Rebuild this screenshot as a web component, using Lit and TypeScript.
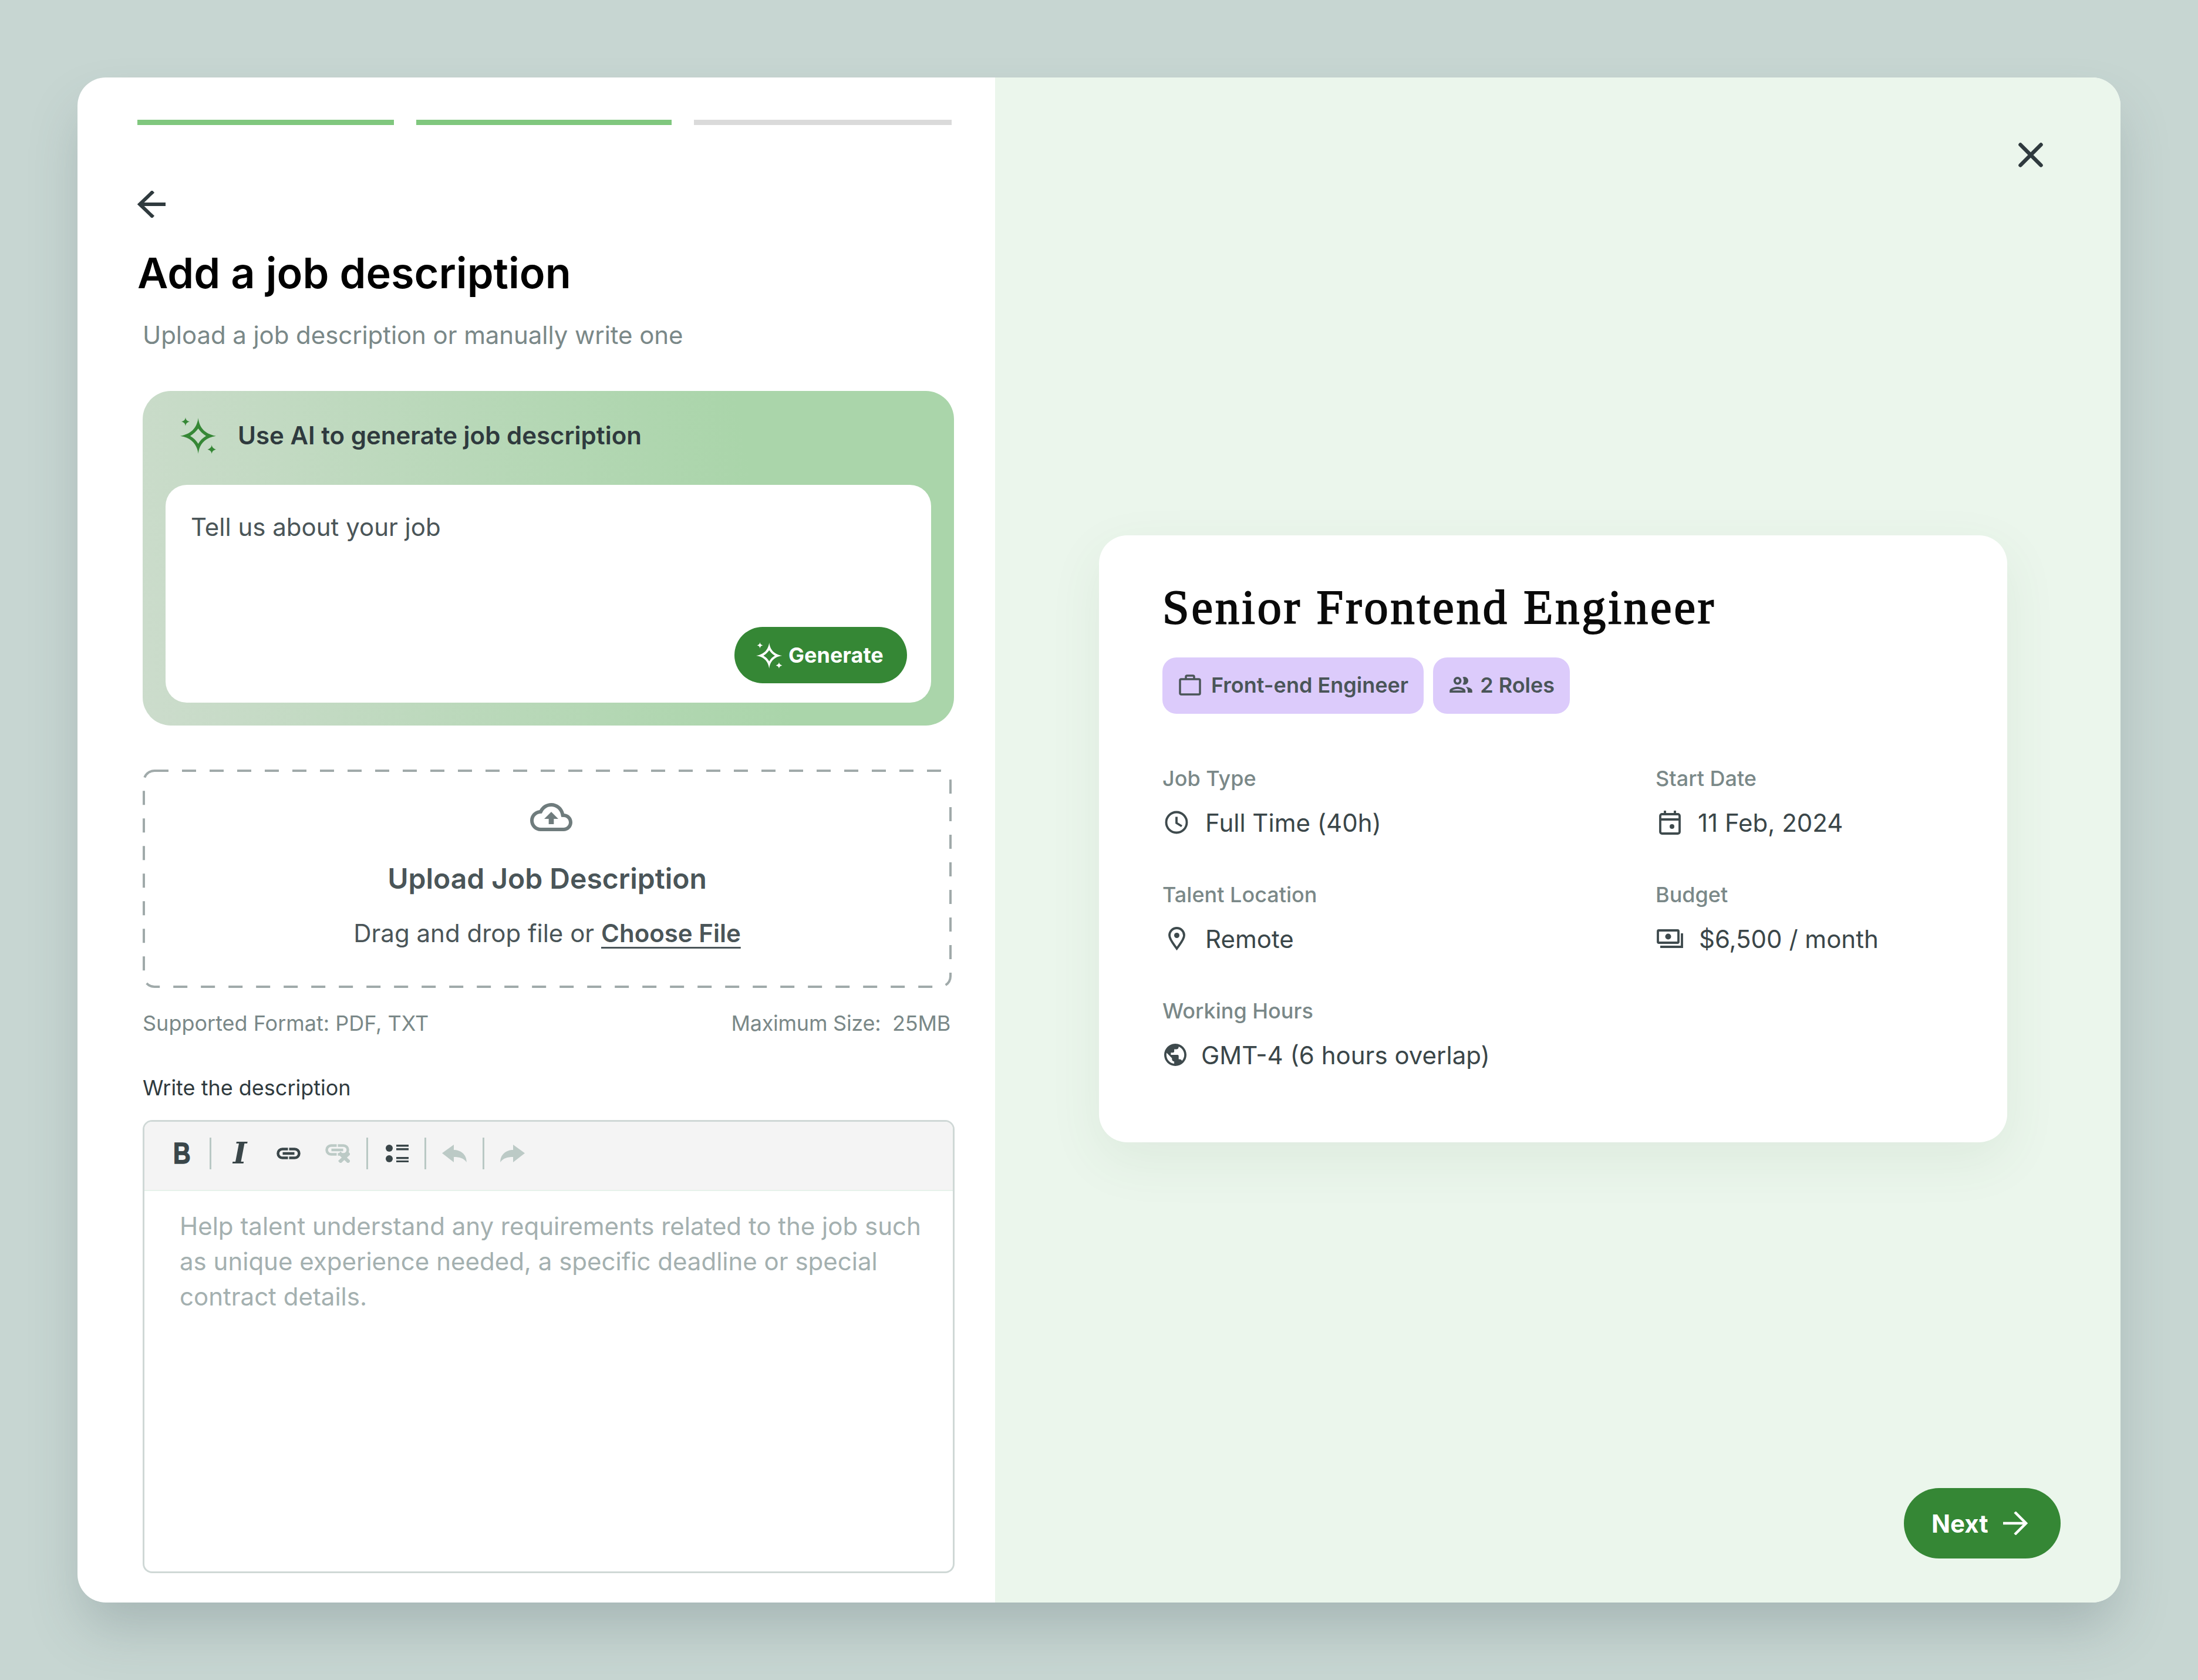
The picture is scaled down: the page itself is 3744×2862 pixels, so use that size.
import { LitElement, html, css, svg } from 'lit'
import { customElement } from 'lit/decorators.js'

const sparkle = svg`
  <path fill-rule="evenodd" d="M47.7 17C49 30 56 44 78 47.7C56 51 49 65 47.7 78C46 65 39 51 17 47.7C39 44 46 30 47.7 17ZM47.7 35C51 40 55 44 61 47.7C55 51 51 55 47.7 61C44 55 40 51 34 47.7C40 44 44 40 47.7 35Z"/>
  <path d="M26 16C26.6 20 28 22 33 23.3C28 24.6 26.6 27 26 31C25.4 27 24 24.6 19 23.3C24 22 25.4 20 26 16Z"/>
  <path d="M70.7 63C71.3 67 73 69 78 70.7C73 72 71.3 74 70.7 78C70 74 68.4 72 63.4 70.7C68.4 69 70 67 70.7 63Z"/>
`

const linkShape = svg`
  <path d="M19.5 2.5H10a7.5 7.5 0 0 0 0 15h9.500" />
  <path d="M21.500 2.500H31a7.500 7.500 0 0 1 0 15h-9.500" />
  <path d="M10.500 10H30.500" />
`

const icons = {
  clock: svg`<svg class="ic" width="40" height="40" viewBox="0 0 40 40" fill="none" stroke="currentColor" stroke-width="3.800"><circle cx="20" cy="20" r="17.500"/><path d="M20 10.500V21L29 26.500"/></svg>`,
  calendar: svg`<svg class="ic" width="37" height="41" viewBox="0 0 37 41" fill="none" stroke="currentColor" stroke-width="3.800"><rect x="2" y="6" width="33" height="33" rx="3"/><path d="M2 15H35M10 0V8M27 0V8"/><circle cx="22" cy="27" r="4" fill="currentColor" stroke="none"/></svg>`,
  pin: svg`<svg class="ic" width="29" height="40" viewBox="0 0 29 40" fill="none" stroke="currentColor" stroke-width="3.800"><path d="M14.500 37C9 29 2 21.500 2 14.500A12.500 12.500 0 0 1 27 14.500C27 21.500 20 29 14.500 37Z"/><circle cx="14.500" cy="14.500" r="4.500" fill="currentColor" stroke="none"/></svg>`,
  money: svg`<svg class="ic" width="45" height="32" viewBox="0 0 45 32" fill="none" stroke="currentColor" stroke-width="3.800"><rect x="2" y="2" width="35" height="21" rx="1.500"/><circle cx="19.500" cy="12.500" r="5" fill="currentColor" stroke="none"/><path d="M43 7V30H6"/></svg>`,
  globe: svg`<svg class="ic" width="38" height="38" viewBox="2 2 20 20" fill="currentColor"><path d="M12 2C6.480 2 2 6.480 2 12s4.480 10 10 10 10-4.480 10-10S17.520 2 12 2zm-1 17.930c-3.950-.490-7-3.850-7-7.930 0-.620.080-1.210.210-1.790L9 15v1c0 1.100.900 2 2 2v1.930zm6.900-2.540c-.260-.810-1-1.390-1.900-1.390h-1v-3c0-.550-.450-1-1-1H8v-2h2c.550 0 1-.450 1-1V7h2c1.100 0 2-.900 2-2v-.410c2.930 1.190 5 4.060 5 7.410 0 2.080-.800 3.970-2.100 5.390z"/></svg>`,
}

const details = [
  { label: 'Job Type', value: 'Full Time (40h)', icon: icons.clock, cls: 'w60' },
  { label: 'Start Date', value: '11 Feb, 2024', icon: icons.calendar, cls: 'w72' },
  { label: 'Talent Location', value: 'Remote', icon: icons.pin, cls: 'w73' },
  { label: 'Budget', value: '$6,500 / month', icon: icons.money, cls: 'w74' },
  { label: 'Working Hours', value: 'GMT-4 (6 hours overlap)', icon: icons.globe, cls: 'w66' },
]

@customElement('app-root')
export class AppRoot extends LitElement {
  static styles = css`
    :host {
      display: block;
      width: 3744px;
      height: 2862px;
      background: #c7d6d2;
      font-family: Inter, 'Noto Sans', sans-serif;
      overflow: hidden;
    }
    * {
      box-sizing: border-box;
    }
    .modal {
      position: relative;
      top: 132px;
      left: 132px;
      display: flex;
      width: 3480px;
      height: 2598px;
      border-radius: 48px;
      background: #fff;
      box-shadow: 0 50px 90px -10px rgba(70, 90, 95, 0.26);
      overflow: hidden;
    }
    .left {
      width: 1563px;
      flex: none;
      padding: 72px 0 0 102px;
    }
    .right {
      flex: 1;
      display: flex;
      flex-direction: column;
      background: #ebf6ec;
      padding-top: 111px;
    }

    /* progress */
    .steps {
      display: grid;
      grid-template-columns: 437px 435px 439px;
      gap: 38px;
    }
    .steps span {
      height: 9px;
      background: #80c77e;
    }
    .steps span.off {
      background: #dadada;
    }
    .back {
      display: block;
      margin-top: 112px;
      color: #2f3a3e;
    }
    h1 {
      margin: 50px 0 0;
      font-size: 72px;
      line-height: 88px;
      font-weight: 600;
      color: #000;
    }
    .sub {
      margin: 34px 0 0 9px;
      font-size: 42px;
      line-height: 56px;
      letter-spacing: -0.08px;
      color: #7a8888;
    }

    .col {
      margin-left: 9px;
    }
    .ai {
      width: 1382px;
      height: 570px;
      margin-top: 67px;
      border-radius: 48px;
      background: linear-gradient(80deg, #ccdccc 0%, #aad5aa 75%);
    }
    .ai-head {
      display: flex;
      align-items: center;
      gap: 36px;
      height: 151px;
      margin-bottom: 9px;
      padding-left: 64px;
      font-size: 42px;
      font-weight: 600;
      color: #2f3a3e;
    }
    .spark {
      fill: #358735;
    }
    .ai-box {
      display: flex;
      flex-direction: column;
      justify-content: space-between;
      width: 1304px;
      height: 371px;
      margin-left: 39px;
      padding: 47px 41px 33px 43px;
      border-radius: 36px;
      background: #fff;
      font-size: 42px;
      line-height: 50px;
      color: #4a5558;
    }
    .gen {
      align-self: flex-end;
      display: flex;
      align-items: center;
      gap: 10px;
      height: 96px;
      width: 294px;
      padding-left: 37px;
      border-radius: 48px;
      background: #358735;
      color: #fff;
      font-size: 36px;
      font-weight: 700;
    }
    .gen .spark {
      fill: #fff;
    }

    .drop {
      position: relative;
      display: flex;
      flex-direction: column;
      align-items: center;
      width: 1378px;
      height: 372px;
      margin-top: 75px;
      padding-top: 57px;
      color: #4a5558;
    }
    .dash {
      position: absolute;
      inset: 0;
      width: 100%;
      height: 100%;
      fill: none;
      stroke: #a0aaaa;
      stroke-width: 4;
      stroke-dasharray: 24 23;
    }
    .cloud {
      fill: #6f7c7d;
      margin-left: 14px;
    }
    .drop h2 {
      margin: 51px 0 0;
      font-size: 48px;
      line-height: 60px;
      font-weight: 600;
    }
    .drop p {
      margin: 35px 0 0;
      font-size: 42px;
      line-height: 56px;
    }
    .drop b {
      font-weight: 600;
      text-decoration: underline;
      text-underline-offset: 8px;
      text-decoration-thickness: 3px;
    }
    .meta {
      display: flex;
      justify-content: space-between;
      width: 1376px;
      margin-top: 38px;
      font-size: 36px;
      line-height: 44px;
      color: #7a8888;
    }
    .meta .max {
      letter-spacing: -0.25px;
    }
    .write {
      margin-top: 66px;
      font-size: 36px;
      line-height: 44px;
      color: #2f3a3e;
    }

    .editor {
      width: 1383px;
      height: 772px;
      margin-top: 33px;
      border: 3px solid #cfd8d6;
      border-radius: 16px;
      overflow: hidden;
    }
    .toolbar {
      display: flex;
      align-items: center;
      height: 118px;
      padding: 0 0 8px 49px;
      background: #f4f4f4;
      border-bottom: 2px solid #e6f1ea;
      color: #3a4649;
    }
    .sep {
      width: 3px;
      height: 54px;
      background: #b9c8c4;
    }
    .tb-b {
      width: 29px;
      font-family: 'Liberation Sans', sans-serif;
      font-weight: 700;
      font-size: 50px;
      line-height: 54px;
      -webkit-text-stroke: 1.5px currentColor;
      transform: scaleX(0.82);
      transform-origin: left center;
      margin-right: 33px;
    }
    .tb-i {
      width: 26px;
      margin: 0 48px 0 37px;
      font-family: 'DejaVu Serif', serif;
      font-weight: 700;
      font-style: italic;
      font-size: 50px;
      line-height: 54px;
    }
    .link {
      fill: none;
      stroke: currentColor;
      stroke-width: 4.500;
    }
    .pale {
      color: #bccac6;
    }
    .tb-unlink {
      margin: 0 28px 0 42px;
    }
    .tb-list {
      margin: 0 27px 0 30px;
    }
    .tb-undo {
      margin: 0 27px 0 27px;
      fill: #bccac6;
    }
    .tb-redo {
      margin-left: 27px;
      fill: #bccac6;
    }
    .body {
      padding: 30px 40px 0 60px;
      font-size: 42px;
      line-height: 60px;
      color: #a4b0b0;
    }

    /* right side */
    .close {
      align-self: flex-end;
      display: block;
      margin-right: 132px;
      stroke: #2f3a3e;
    }
    .card {
      width: 1547px;
      height: 1034px;
      margin: 627px 0 0 177px;
      padding: 73px 0 0 108px;
      border-radius: 48px;
      background: #fff;
      box-shadow: 0 30px 90px rgba(60, 100, 70, 0.08);
    }
    .card h2 {
      margin: 0;
      font-family: 'Liberation Serif', serif;
      font-size: 82px;
      line-height: 100px;
      font-weight: 400;
      letter-spacing: 4px;
      -webkit-text-stroke: 2px #0a0a0a;
      color: #0a0a0a;
    }
    .pills {
      display: flex;
      gap: 16px;
      margin-top: 35px;
    }
    .pill {
      display: flex;
      align-items: center;
      height: 96px;
      padding: 0 26px 3px 28px;
      gap: 17px;
      border-radius: 24px;
      background: #dccbfb;
      color: #4a5558;
      font-size: 36px;
      font-weight: 600;
    }
    .pill.tight {
      gap: 13px;
    }
    .grid {
      display: grid;
      grid-template-columns: 840px 1fr;
      row-gap: 77px;
      margin-top: 88px;
    }
    .label {
      font-size: 36px;
      line-height: 44px;
      color: #7a8888;
      font-weight: 500;
    }
    .value {
      display: flex;
      align-items: center;
      height: 48px;
      margin-top: 29px;
      font-size: 42px;
      color: #3a4649;
    }
    .ic {
      flex: none;
      color: #3e4a4d;
    }
    .slot {
      display: flex;
      align-items: center;
    }
    .w60 {
      width: 73px;
      padding-left: 4px;
    }
    .w72 {
      width: 72px;
      padding-left: 6px;
    }
    .w73 {
      width: 73px;
      padding-left: 10px;
    }
    .w74 {
      width: 74px;
      padding-left: 2px;
    }
    .w66 {
      width: 66px;
      padding-left: 3px;
    }
    .next {
      align-self: flex-end;
      display: flex;
      align-items: center;
      gap: 25px;
      width: 267px;
      height: 120px;
      margin: auto 102px 75px 0;
      padding-left: 47px;
      border-radius: 60px;
      background: #358735;
      color: #fff;
      font-size: 42px;
      font-weight: 700;
    }
  `

  render() {
    return html`
      <div class="modal">
        <section class="left">
          <div class="steps"><span></span><span></span><span class="off"></span></div>
          <svg class="back" width="48" height="46" viewBox="0 0 48 46" fill="none" stroke="currentColor" stroke-width="6">
            <path d="M48 23H4M27 1L4 23L27 45" />
          </svg>
          <h1>Add a job description</h1>
          <p class="sub">Upload a job description or manually write one</p>

          <div class="col">
            <div class="ai">
              <div class="ai-head">
                <svg class="spark" width="62" height="62" viewBox="17 16 62 62">${sparkle}</svg>
                Use AI to generate job description
              </div>
              <div class="ai-box">
                <span>Tell us about your job</span>
                <div class="gen">
                  <svg class="spark" width="45" height="45" viewBox="17 16 62 62">${sparkle}</svg>
                  Generate
                </div>
              </div>
            </div>

            <div class="drop">
              <svg class="dash" viewBox="0 0 1378 372"><rect x="2" y="2" width="1374" height="368" rx="18" /></svg>
              <svg class="cloud" width="72" height="48" viewBox="0 4 24 16">
                <path d="M19.350 10.040C18.670 6.590 15.640 4 12 4 9.110 4 6.600 5.640 5.350 8.040 2.340 8.360 0 10.910 0 14c0 3.310 2.690 6 6 6h13c2.760 0 5-2.240 5-5 0-2.640-2.050-4.780-4.650-4.960zM19 18H6c-2.210 0-4-1.790-4-4 0-2.050 1.530-3.760 3.560-3.970l1.070-.110.500-.950C8.080 7.140 9.940 6 12 6c2.620 0 4.880 1.860 5.390 4.430l.300 1.500 1.530.110c1.560.100 2.780 1.410 2.780 2.960 0 1.650-1.350 3-3 3zM8 13h2.550v3h2.900v-3H16l-4-4z" />
              </svg>
              <h2>Upload Job Description</h2>
              <p>Drag and drop file or <b>Choose File</b></p>
            </div>

            <div class="meta">
              <span>Supported Format: PDF, TXT</span>
              <span class="max">Maximum Size:&nbsp; 25MB</span>
            </div>

            <div class="write">Write the description</div>

            <div class="editor">
              <div class="toolbar">
                <span class="tb-b">B</span>
                <span class="sep"></span>
                <span class="tb-i">I</span>
                <svg class="link" width="41" height="20" viewBox="0 0 41 20">${linkShape}</svg>
                <svg class="link pale tb-unlink" width="42" height="32" viewBox="0 0 42 32">
                  ${linkShape}
                  <path d="M24 15L41 31M41 15L24 31" stroke-width="6" />
                </svg>
                <span class="sep"></span>
                <svg class="tb-list" width="39" height="30" viewBox="0 0 39 30" fill="currentColor">
                  <circle cx="6" cy="6" r="6" /><circle cx="6" cy="24" r="6" />
                  <rect x="18" y="0" width="21" height="3.500" /><rect x="18" y="6" width="21" height="3.500" />
                  <rect x="18" y="21" width="21" height="3.500" /><rect x="18" y="27" width="21" height="3.500" />
                </svg>
                <span class="sep"></span>
                <svg class="tb-undo" width="42" height="30" viewBox="0 0 42 30">
                  <path d="M0 14.500L20 0V9C32 9 42 17 41.700 30C37 23 30 21 20 21V30Z" />
                </svg>
                <span class="sep"></span>
                <svg class="tb-redo" width="42" height="30" viewBox="0 0 42 30">
                  <path d="M42 14.500L22 0V9C10 9 0 17 0.300 30C5 23 12 21 22 21V30Z" />
                </svg>
              </div>
              <div class="body">
                Help talent understand any requirements related to the job such as unique experience needed, a specific
                deadline or special contract details.
              </div>
            </div>
          </div>
        </section>

        <section class="right">
          <svg class="close" width="42" height="42" viewBox="0 0 42 42" fill="none" stroke-width="6.500" stroke-linecap="round">
            <path d="M3.500 3.500L38.500 38.500M38.500 3.500L3.500 38.500" />
          </svg>
          <div class="card">
            <h2>Senior Frontend Engineer</h2>
            <div class="pills">
              <div class="pill">
                <svg width="38" height="36" viewBox="0 0 38 36" fill="none" stroke="currentColor" stroke-width="3.500">
                  <rect x="2" y="8" width="34" height="26" rx="2" /><path d="M12 8V4a2 2 0 0 1 2-2h10a2 2 0 0 1 2 2V8" />
                </svg>
                Front-end Engineer
              </div>
              <div class="pill tight">
                <svg width="39" height="27" viewBox="2 5 20 14" fill="currentColor">
                  <path d="M9 13.750c-2.340 0-7 1.170-7 3.500V19h14v-1.750c0-2.330-4.660-3.500-7-3.500zM4.340 17c.840-.580 2.870-1.250 4.660-1.250s3.820.670 4.660 1.250H4.340zM9 12c1.930 0 3.500-1.570 3.500-3.500S10.930 5 9 5 5.500 6.570 5.500 8.500 7.070 12 9 12zm0-5c.830 0 1.500.670 1.500 1.500S9.830 10 9 10s-1.500-.670-1.500-1.500S8.170 7 9 7zm7.040 6.810c1.160.840 1.960 1.960 1.960 3.440V19h4v-1.750c0-2.020-3.500-3.170-5.960-3.440zM15 12c1.930 0 3.500-1.570 3.500-3.500S16.930 5 15 5c-.540 0-1.040.130-1.500.350.630.890 1 1.980 1 3.150s-.370 2.260-1 3.150c.460.220.960.350 1.500.350z" />
                </svg>
                2 Roles
              </div>
            </div>
            <div class="grid">
              ${details.map(
                (d) => html`
                  <div>
                    <div class="label">${d.label}</div>
                    <div class="value"><span class="slot ${d.cls}">${d.icon}</span>${d.value}</div>
                  </div>
                `,
              )}
            </div>
          </div>
          <div class="next">
            Next
            <svg width="42" height="40" viewBox="0 0 42 40" fill="none" stroke="#fff" stroke-width="4.500">
              <path d="M0 20H38M20 1L39 20L20 39" />
            </svg>
          </div>
        </section>
      </div>
    `
  }
}
